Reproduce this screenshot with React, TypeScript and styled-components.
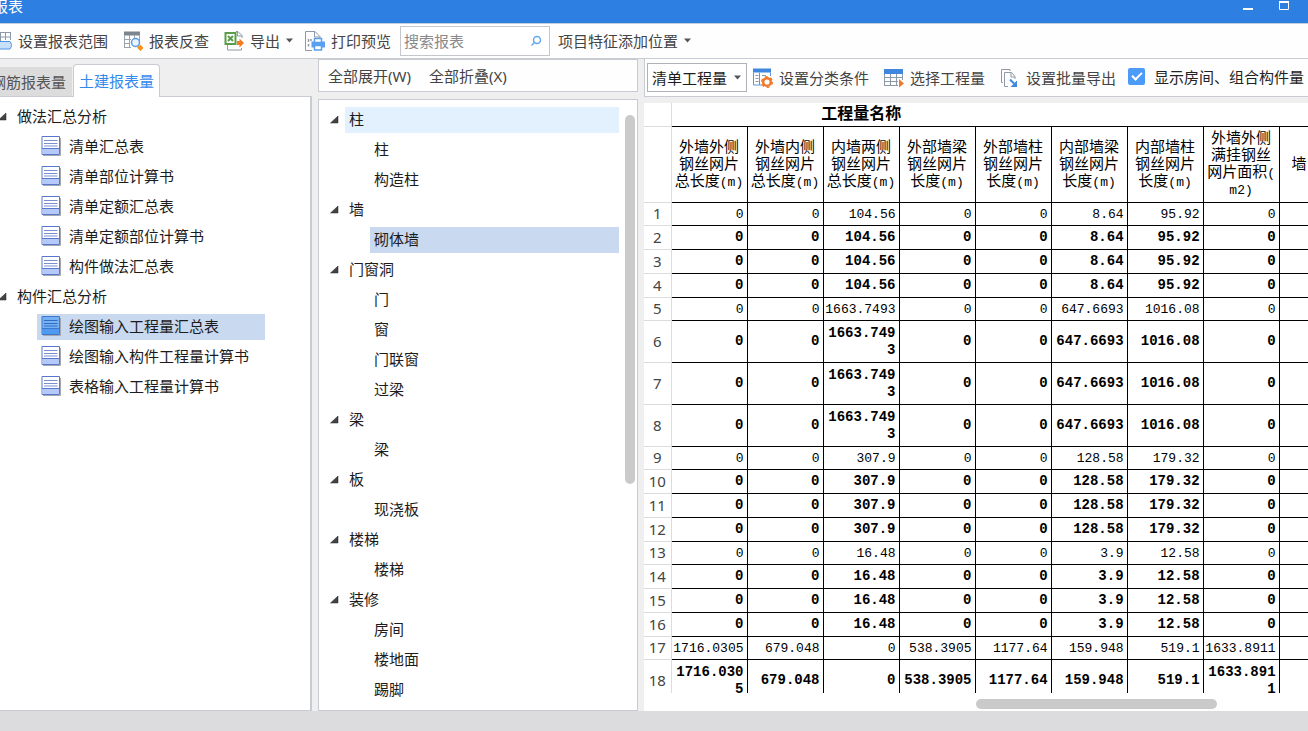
import React from 'react';
import styled, { createGlobalStyle, css } from 'styled-components';

const uiFont = '"Noto Sans", "Noto Sans CJK SC", sans-serif';
const gridFont = '"Liberation Mono", "Noto Sans CJK SC", monospace';
const line = '#c8ccd2';

const Global = createGlobalStyle`
  *, *::before, *::after { box-sizing: border-box; }
  body { margin: 0; overflow: hidden; background: #dcdcde; }
  button, input, select { font: inherit; color: inherit; }
`;

const Viewport = styled.div`
  height: 100vh;
  overflow: hidden;
  font: 15px/20px ${uiFont};
  color: #333;
`;

const Frame = styled.div`
  display: flex;
  flex-direction: column;
  height: 100%;
  margin-left: -10px;
  white-space: nowrap;
`;

const TitleBar = styled.header`
  display: flex;
  justify-content: space-between;
  flex: none;
  height: 23px;
  padding: 0 17px 0 3px;
  background: #2d7fe1;
  color: #fff;
`;

const Title = styled.h1`
  margin: 0;
  font-size: 15px;
  font-weight: 400;
  line-height: 12px;
`;

const WindowButtons = styled.div`
  display: flex;
  gap: 22px;
`;

const IconButton = styled.button`
  display: flex;
  padding: 0;
  border: 0;
  background: none;
`;

const MainBar = styled.div`
  display: flex;
  align-items: center;
  flex: none;
  height: 36px;
  padding: 0 0 1px 2px;
  background: #fefefe;
  border-top: 1px solid #c3cede;
  border-bottom: 1px solid ${line};
`;

const ToolButton = styled.button<{ $after?: number }>`
  display: flex;
  align-items: center;
  gap: 6px;
  flex: none;
  padding: 0;
  margin-right: ${p => p.$after ?? 15}px;
  border: 0;
  background: none;
  color: #444;
`;

const SearchBox = styled.label`
  display: flex;
  align-items: center;
  flex: none;
  width: 150px;
  height: 30px;
  padding: 0 7px 0 3px;
  margin-right: 8px;
  border: 1px solid #c4c8cd;
  background: #fff;
`;

const SearchInput = styled.input`
  flex: 1;
  min-width: 0;
  padding: 0;
  border: 0;
  outline: 0;
  background: none;
  &::placeholder { color: #8a8a8a; opacity: 1; }
`;

const Body = styled.main`
  display: flex;
  flex: 1;
  min-height: 0;
  background: #efeff0;
`;

const ReportPane = styled.section`
  display: flex;
  flex-direction: column;
  flex: none;
  width: 322px;
  padding-top: 5px;
`;

const Tabs = styled.div`
  display: flex;
  align-items: flex-end;
  height: 32px;
`;

const Tab = styled.button<{ $active?: boolean }>`
  height: 29px;
  padding: 0 6px 0 1px;
  border: 0;
  background: #dcdcdd;
  color: #555;
  ${p => p.$active && css`
    position: relative;
    height: 33px;
    margin-bottom: -1px;
    margin-left: 1px;
    padding: 0 5px 1px;
    border: 1px solid ${line};
    border-bottom: 0;
    border-radius: 4px 4px 0 0;
    background: #fff;
    color: #3489ec;
  `}
`;

const ReportTree = styled.ul`
  flex: 1;
  margin: 0;
  padding: 5px 45px 0 8px;
  list-style: none;
  background: #fff;
  border: solid ${line};
  border-width: 1px 2px 1px 0;
`;

const Branch = styled.ul<{ $indent: number }>`
  margin: 0;
  padding: 0 0 0 ${p => p.$indent}px;
  list-style: none;
`;

const NodeRow = styled.div`
  display: flex;
  align-items: center;
  height: 30px;
`;

const Toggle = styled.button`
  flex: none;
  display: flex;
  width: 15px;
  padding: 0 0 2px;
  border: 0;
  background: none;
`;

const NodeButton = styled.button<{ $tone?: string }>`
  display: flex;
  align-items: center;
  gap: 8px;
  flex: 1;
  height: 26px;
  padding: 0 4px 2px;
  border: 0;
  background: ${p => p.$tone ?? 'none'};
  color: #1c1c1c;
  text-align: left;
`;

const PartPane = styled.section`
  display: flex;
  flex-direction: column;
  flex: none;
  width: 320px;
  margin-left: 6px;
  gap: 7px;
`;

const PartBar = styled.div`
  display: flex;
  gap: 18px;
  height: 33px;
  padding-left: 9px;
  background: #fefefe;
  border: 1px solid ${line};
`;

const PartBox = styled.div`
  display: flex;
  flex: 1;
  min-height: 0;
  overflow: hidden;
  background: #fff;
  border: 1px solid ${line};
`;

const PartTree = styled.ul`
  flex: 1;
  margin: 0;
  padding: 5px 0 0 11px;
  list-style: none;
`;

const VerticalRail = styled.div`
  width: 18px;
  padding: 15px 2px 0 6px;
`;

const VerticalThumb = styled.div`
  height: 62%;
  border-radius: 5px;
  background: #cacaca;
`;

const GridPane = styled.section`
  display: flex;
  flex-direction: column;
  flex: 1;
  min-width: 0;
  margin-left: 6px;
  overflow: hidden;
`;

const GridBar = styled.div`
  display: flex;
  align-items: center;
  flex: none;
  height: 38px;
  margin-bottom: 6px;
  padding-left: 2px;
  background: #fefefe;
  border: 1px solid ${line};
  border-right: 0;
  border-top: 0;
`;

const SelectBox = styled.label`
  display: flex;
  align-items: center;
  flex: none;
  width: 100px;
  height: 29px;
  padding: 0 5px 0 4px;
  margin-right: 6px;
  border: 1px solid #aeb2b8;
  background: #fff;
`;

const Select = styled.select`
  flex: 1;
  min-width: 0;
  padding: 0;
  border: 0;
  outline: 0;
  appearance: none;
  background: none;
  color: #1c1c1c;
`;

const CheckLabel = styled.label`
  display: flex;
  align-items: center;
  flex: none;
  gap: 9px;
  padding-bottom: 2px;
  color: #222;
`;

const CheckBox = styled.input`
  display: grid;
  place-items: center;
  width: 17px;
  height: 17px;
  margin: 0;
  appearance: none;
  border-radius: 2px;
  background: #4c9bf8;
  &::after {
    content: '';
    width: 10px;
    height: 6px;
    margin-top: -3px;
    border: solid #fff;
    border-width: 0 0 2px 2px;
    transform: rotate(-45deg);
  }
`;

const GridView = styled.div`
  flex: 1;
  min-height: 0;
  overflow: hidden;
  background: #fff;
`;

const HorizontalRail = styled.div`
  flex: none;
  height: 18px;
  padding: 6px 91px 2px 50%;
  background: #fff;
`;

const HorizontalThumb = styled.div`
  height: 10px;
  border-radius: 5px;
  background: #cacaca;
`;

const Table = styled.table`
  width: 711px;
  table-layout: fixed;
  border-collapse: collapse;
  font-family: ${gridFont};
  color: #000;
`;

const Col = styled.col<{ $index?: boolean }>`
  width: ${p => (p.$index ? 27 : 76)}px;
`;

const GroupHead = styled.th`
  height: 23px;
  padding: 2px 0 0;
  border-bottom: 1px solid #000;
  font-size: 16px;
  line-height: 20px;
`;

const ColumnHead = styled.th<{ $clipped?: boolean }>`
  height: 76px;
  padding: ${p => (p.$clipped ? '2px 0 0 12px' : '2px 0 0')};
  border: 1px solid #000;
  font-size: 15px;
  font-weight: 400;
  line-height: 17px;
  text-align: ${p => (p.$clipped ? 'left' : 'center')};
  &:nth-child(2) { border-left-color: #dcdcdc; }
`;

const Unit = styled.span`
  font-size: 13px;
`;

const IndexCell = styled.th`
  padding: 0;
  border: solid #dcdcdc;
  border-width: 0 1px 1px 0;
  font: 15px/17px ${uiFont};
  color: #444;
`;

const Row = styled.tr<{ $total: boolean; $tall: boolean }>`
  height: ${p => (p.$tall ? 42 : p.$total ? 24 : 23)}px;
  font-size: ${p => (p.$total ? 14 : 13)}px;
  font-weight: ${p => (p.$total ? 700 : 400)};
`;

const Cell = styled.td`
  padding: 1px 3px 0 1px;
  border: 1px solid #000;
  line-height: 17px;
  text-align: right;
  white-space: normal;
  word-break: break-all;
  &:nth-child(2) { border-left-color: #dcdcdc; }
`;

const StatusBar = styled.footer`
  flex: none;
  height: 20px;
  background: #dcdcde;
`;

const Svg = ({ size = 20, children }: { size?: number; children: React.ReactNode }) => (
  <svg width={size} height={size} viewBox={`0 0 ${size} ${size}`} fill="none" aria-hidden="true">{children}</svg>
);

const Caret = () => (
  <svg width="7" height="5" viewBox="0 0 7 5" aria-hidden="true"><path d="M0 0.5h7L3.5 4.5z" fill="#555" /></svg>
);

const RangeIcon = () => (
  <Svg>
    <path d="M3 1.500h16M3 6h16M3 10.500h5M3.500 1v12M8.500 1v9M13.500 1v8M18.500 1v8" stroke="#8d99a6" />
    <path d="M6 10.500h12l2 3.500-2 4H6z" fill="#c9e0fb" stroke="#4c92e6" />
  </Svg>
);

const InspectIcon = () => (
  <Svg>
    <path d="M1 .5h16v4H1z" fill="#7b858f" />
    <path d="M1.500 4v13M6.500 4v13M11.500 4v3M16.500 4v6M1 8.500h7M1 12.500h6M1 16.500h7" stroke="#9aa4ad" />
    <circle cx="12.500" cy="11.500" r="4" fill="#eaf4ff" stroke="#5c9be6" strokeWidth="1.500" />
    <path d="M15.500 15l3.500 3.500" stroke="#f7941d" strokeWidth="4.500" />
  </Svg>
);

const ExportIcon = () => (
  <Svg>
    <path d="M12 .5h2l4 4V7M3.500 14v5h14v-2M13.500 1v4h4.500" stroke="#8d99a6" />
    <path d="M1.500 2h10v11h-10z" fill="#fff" stroke="#5b9c4a" strokeWidth="2" />
    <path d="M4 5l5 5M9 5l-5 5" stroke="#5b9c4a" strokeWidth="2" />
    <path d="M13 10h2.500V7.500l4.500 4.500-4.500 4.500V14H13z" fill="#f47b20" />
  </Svg>
);

const PrintIcon = () => (
  <Svg>
    <path d="M7 19.500H.5V.5H10l5 5V7M9.500 1v5H15" stroke="#8d99a6" />
    <path d="M3.500 8v3M6 8v2M3.500 13v2.500" stroke="#8d99a6" strokeWidth="1.500" />
    <path d="M6.500 10.500H20v6H6.500z" fill="#5a9ff0" />
    <path d="M9.500 7.500h7v4h-7zM9.500 14.500h7v4.500h-7z" fill="#fff" stroke="#5a9ff0" strokeWidth="1.500" />
  </Svg>
);

const ConditionIcon = () => (
  <Svg>
    <path d="M0 .5h18v4H0z" fill="#3f87de" />
    <path d="M.5 4.500v12.500H9M17.500 4.500V8M6.500 4.500V17" stroke="#5b97df" />
    <path d="M2.500 7.500h3M2.500 10.500h3M2.500 13.500h3M9 7.500h4" stroke="#8d99a6" />
    <circle cx="14" cy="14" r="3.800" stroke="#f07a2b" strokeWidth="2.500" fill="#fff" />
    <circle cx="14" cy="14" r="5.300" stroke="#f07a2b" strokeWidth="1.500" strokeDasharray="2.800 2.750" />
  </Svg>
);

const PickIcon = () => (
  <Svg>
    <path d="M0 1h19v5H0z" fill="#3f87de" />
    <path d="M.5 6v12M6.500 6v12M12.500 6v12M18.500 6v6M0 9.500h19M0 13.500h14M0 17.500h14" stroke="#8d99a6" />
    <path d="M15 11l5 4.500-5 4z" fill="#f07a2b" />
  </Svg>
);

const BatchIcon = () => (
  <Svg>
    <path d="M3 14.500H1.500v-13h8.500V3M8 18.500H4.500V4.500h7l3.500 4V11M11 5v4h4" stroke="#8d99a6" />
    <path d="M10 11.500l4 4" stroke="#3f87de" strokeWidth="2" />
    <path d="M17 12.500V19h-6.500z" fill="#3f87de" />
  </Svg>
);

const SearchIcon = () => (
  <Svg size={12}>
    <circle cx="7" cy="5" r="3.500" stroke="#63a9ef" strokeWidth="1.500" />
    <path d="M4.500 7.500L1.500 10.500" stroke="#63a9ef" strokeWidth="1.500" />
  </Svg>
);

const SheetIcon = ({ active }: { active?: boolean }) => (
  <Svg>
    <path d="M2 19.500h17.500V2" stroke="#a4a7ae" />
    <path d="M1 .5h17.500v18H1z" fill={active ? '#76b2f2' : '#fff'} stroke={active ? '#3d78cf' : '#5878cc'} />
    <path d="M1.500 13H18v5H1.500z" fill={active ? '#4f9af0' : '#b5c9fb'} />
    <path d="M1 12.500h17.500" stroke={active ? '#3d78cf' : '#5878cc'} />
    <path d="M3 4.500h13.500M3 7.500h13.500M3 10h13.500" stroke={active ? '#2f6cc6' : '#7a8fd0'} />
  </Svg>
);

const Arrow = () => (
  <svg width="9" height="9" viewBox="0 0 9 9" aria-hidden="true"><path d="M8 1v7H.5z" fill="#444" stroke="#222" strokeWidth="0.5" /></svg>
);

const selected = '#c9d9f0';
const hovered = '#e3f1fe';

const reports = [
  { name: '做法汇总分析', items: ['清单汇总表', '清单部位计算书', '清单定额汇总表', '清单定额部位计算书', '构件做法汇总表'] },
  { name: '构件汇总分析', items: ['绘图输入工程量汇总表', '绘图输入构件工程量计算书', '表格输入工程量计算书'] },
];
const activeReport = '绘图输入工程量汇总表';

const parts = [
  { name: '柱', items: ['柱', '构造柱'] },
  { name: '墙', items: ['砌体墙'] },
  { name: '门窗洞', items: ['门', '窗', '门联窗', '过梁'] },
  { name: '梁', items: ['梁'] },
  { name: '板', items: ['现浇板'] },
  { name: '楼梯', items: ['楼梯'] },
  { name: '装修', items: ['房间', '楼地面', '踢脚'] },
];
const activePart = '砌体墙';

const heads = [
  ['外墙外侧', '钢丝网片', '总长度'],
  ['外墙内侧', '钢丝网片', '总长度'],
  ['内墙两侧', '钢丝网片', '总长度'],
  ['外部墙梁', '钢丝网片', '长度'],
  ['外部墙柱', '钢丝网片', '长度'],
  ['内部墙梁', '钢丝网片', '长度'],
  ['内部墙柱', '钢丝网片', '长度'],
];

// Each group repeats one detail line followed by its subtotal lines.
const groups = [
  { values: ['0', '0', '104.56', '0', '0', '8.64', '95.92', '0'], count: 4 },
  { values: ['0', '0', '1663.7493', '0', '0', '647.6693', '1016.08', '0'], count: 4 },
  { values: ['0', '0', '307.9', '0', '0', '128.58', '179.32', '0'], count: 4 },
  { values: ['0', '0', '16.48', '0', '0', '3.9', '12.58', '0'], count: 4 },
  { values: ['1716.0305', '679.048', '0', '538.3905', '1177.64', '159.948', '519.1', '1633.8911'], count: 2 },
];
const rows = groups.flatMap(g => Array.from({ length: g.count }, (_, i) => ({ values: g.values, total: i > 0 })));

export default function App() {
  return (
    <Viewport>
      <Global />
      <Frame>
        <TitleBar>
          <Title>报表</Title>
          <WindowButtons>
            <IconButton aria-label="最小化"><Svg size={14}><path d="M2 9h10" stroke="#fff" strokeWidth="2" /></Svg></IconButton>
            <IconButton aria-label="最大化"><Svg size={14}><path d="M2.500 2h9v7.500h-9z" stroke="#fff" /><path d="M2 2h10" stroke="#fff" strokeWidth="2" /></Svg></IconButton>
          </WindowButtons>
        </TitleBar>

        <MainBar>
          <ToolButton><RangeIcon />设置报表范围</ToolButton>
          <ToolButton><InspectIcon />报表反查</ToolButton>
          <ToolButton $after={12}><ExportIcon />导出<Caret /></ToolButton>
          <ToolButton $after={9}><PrintIcon />打印预览</ToolButton>
          <SearchBox>
            <SearchInput type="text" placeholder="搜索报表" aria-label="搜索报表" />
            <SearchIcon />
          </SearchBox>
          <ToolButton>项目特征添加位置<Caret /></ToolButton>
        </MainBar>

        <Body>
          <ReportPane>
            <Tabs>
              <Tab>钢筋报表量</Tab>
              <Tab $active>土建报表量</Tab>
            </Tabs>
            <ReportTree>
              {reports.map(group => (
                <li key={group.name}>
                  <NodeRow>
                    <Toggle aria-label={`折叠${group.name}`}><Arrow /></Toggle>
                    <NodeButton>{group.name}</NodeButton>
                  </NodeRow>
                  <Branch $indent={39}>
                    {group.items.map(item => (
                      <li key={item}>
                        <NodeRow>
                          <NodeButton $tone={item === activeReport ? selected : undefined}>
                            <SheetIcon active={item === activeReport} />{item}
                          </NodeButton>
                        </NodeRow>
                      </li>
                    ))}
                  </Branch>
                </li>
              ))}
            </ReportTree>
          </ReportPane>

          <PartPane>
            <PartBar>
              <ToolButton $after={0}>全部展开(W)</ToolButton>
              <ToolButton $after={0}>全部折叠(X)</ToolButton>
            </PartBar>
            <PartBox>
              <PartTree>
                {parts.map((group, i) => (
                  <li key={group.name}>
                    <NodeRow>
                      <Toggle aria-label={`折叠${group.name}`}><Arrow /></Toggle>
                      <NodeButton $tone={i === 0 ? hovered : undefined}>{group.name}</NodeButton>
                    </NodeRow>
                    <Branch $indent={40}>
                      {group.items.map(item => (
                        <li key={item}>
                          <NodeRow>
                            <NodeButton $tone={item === activePart ? selected : undefined}>{item}</NodeButton>
                          </NodeRow>
                        </li>
                      ))}
                    </Branch>
                  </li>
                ))}
              </PartTree>
              <VerticalRail><VerticalThumb /></VerticalRail>
            </PartBox>
          </PartPane>

          <GridPane>
            <GridBar>
              <SelectBox>
                <Select aria-label="工程量类型"><option>清单工程量</option></Select>
                <Caret />
              </SelectBox>
              <ToolButton><ConditionIcon />设置分类条件</ToolButton>
              <ToolButton><PickIcon />选择工程量</ToolButton>
              <ToolButton $after={12}><BatchIcon />设置批量导出</ToolButton>
              <CheckLabel><CheckBox type="checkbox" defaultChecked />显示房间、组合构件量</CheckLabel>
            </GridBar>
            <GridView>
              <Table>
                <colgroup>
                  <Col $index />
                  {heads.map((_, i) => <Col key={i} />)}
                  <Col />
                  <Col />
                </colgroup>
                <thead>
                  <tr>
                    <IndexCell />
                    <GroupHead colSpan={5}>工程量名称</GroupHead>
                    <GroupHead colSpan={4} />
                  </tr>
                  <tr>
                    <IndexCell />
                    {heads.map(([first, second, third], i) => (
                      <ColumnHead key={i}>
                        {first}<br />{second}<br />{third}<Unit>(m)</Unit>
                      </ColumnHead>
                    ))}
                    <ColumnHead>外墙外侧<br />满挂钢丝<br />网片面积<Unit>(</Unit><br /><Unit>m2)</Unit></ColumnHead>
                    <ColumnHead $clipped>墙</ColumnHead>
                  </tr>
                </thead>
                <tbody>
                  {rows.map(({ values, total }, i) => (
                    <Row key={i} $total={total} $tall={total && values.some(v => v.length > 8)}>
                      <IndexCell scope="row">{i + 1}</IndexCell>
                      {values.map((value, k) => <Cell key={k}>{value}</Cell>)}
                      <Cell />
                    </Row>
                  ))}
                </tbody>
              </Table>
            </GridView>
            <HorizontalRail><HorizontalThumb /></HorizontalRail>
          </GridPane>
        </Body>
        <StatusBar />
      </Frame>
    </Viewport>
  );
}
